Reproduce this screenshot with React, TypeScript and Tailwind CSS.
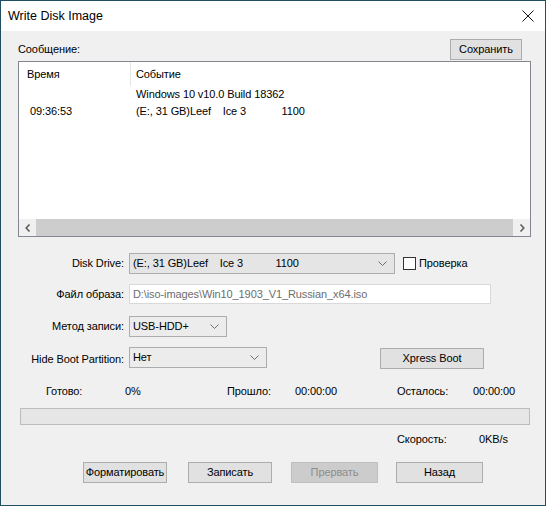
const Chevron = ({ dir }: { dir: 'left' | 'right' | 'down' }) => {
  if (dir === 'down') {
    return (
      <svg width="9" height="5" viewBox="0 0 9 5" className="block">
        <path d="M0.5 0.5 L4.5 4.5 L8.5 0.5" fill="none" stroke="#6e6e6e" strokeWidth="1" />
      </svg>
    )
  }
  return (
    <svg width="6" height="8" viewBox="0 0 6 8" className="block">
      <path
        d={dir === 'left' ? 'M4.5 0.5 L1.2 4 L4.5 7.5' : 'M1.5 0.5 L4.8 4 L1.5 7.5'}
        fill="none"
        stroke="#606060"
        strokeWidth="1.6"
      />
    </svg>
  )
}

const Combo = ({ text, width, bg }: { text: string; width: string; bg: string }) => (
  <div className={`flex h-[21px] ${width} ${bg} items-center justify-between border border-[#adadad] pl-[3px] pr-[7px]`}>
    <span className="whitespace-pre">{text}</span>
    <Chevron dir="down" />
  </div>
)

const Btn = ({ text, width, disabled }: { text: string; width: string; disabled?: boolean }) => (
  <div
    className={`flex h-[21px] ${width} items-center justify-center border ${
      disabled ? 'border-[#bfbfbf] bg-[#cccccc] text-[#8d8d8d]' : 'border-[#adadad] bg-[#e1e1e1] text-black'
    }`}
  >
    {text}
  </div>
)

const App = () => {
  return (
    <div className="h-[509px] w-[549px] bg-white" style={{ fontFamily: '"Liberation Sans", Arial, sans-serif' }}>
      <div className="flex h-[506px] w-[546px] flex-col border border-[#1f4f60] bg-[#f0f0f0] text-[11px] tracking-[-0.1px] text-black">
        {/* title bar */}
        <div className="flex h-[30px] shrink-0 items-center justify-between bg-white pl-[7px] pr-[8px] text-[12.5px] tracking-normal">
          <span>Write Disk Image</span>
          <svg width="12" height="12" viewBox="0 0 12 12" className="mr-[3px]">
            <path d="M0.5 0.5 L11.5 11.5 M11.5 0.5 L0.5 11.5" stroke="#111" strokeWidth="1" />
          </svg>
        </div>

        {/* message header */}
        <div className="ml-[17px] mr-[23px] mt-[8px] flex h-[20px] items-center justify-between">
          <span className="mt-[1px]">Сообщение:</span>
          <Btn text="Сохранить" width="w-[72px]" />
        </div>

        {/* log list */}
        <div className="ml-[17px] mt-[2px] flex h-[176px] w-[513px] flex-col border border-[#828790] bg-white">
          <div className="flex h-[24px] items-stretch">
            <div className="flex w-[112px] items-center border-r border-[#e5e5e5] pl-[8px]">Время</div>
            <div className="flex items-center pl-[5px]">Событие</div>
          </div>
          <div className="flex h-[17px] items-center pl-[117px]">Windows 10 v10.0 Build 18362</div>
          <div className="flex h-[17px] items-center">
            <span className="w-[117px] pl-[11px]">09:36:53</span>
            <span className="whitespace-pre">(E:, 31 GB)Leef    Ice 3            1100</span>
          </div>
          <div className="flex-1" />
          <div className="flex h-[17px] items-stretch">
            <div className="flex w-[17px] items-center justify-center bg-[#f0f0f0]">
              <Chevron dir="left" />
            </div>
            <div className="flex-1 bg-[#cdcdcd]" />
            <div className="flex w-[17px] items-center justify-center bg-[#f0f0f0]">
              <Chevron dir="right" />
            </div>
          </div>
        </div>

        {/* disk drive */}
        <div className="mt-[16px] flex h-[21px] items-center">
          <span className="w-[123px] text-right">Disk Drive:</span>
          <div className="ml-[5px]">
            <Combo text="(E:, 31 GB)Leef    Ice 3           1100" width="w-[266px]" bg="bg-[#e5e5e5]" />
          </div>
          <div className="ml-[8px] h-[13px] w-[13px] border border-[#333] bg-white" />
          <span className="ml-[3px]">Проверка</span>
        </div>

        {/* image file */}
        <div className="mt-[10px] flex h-[20px] items-center">
          <span className="w-[123px] text-right">Файл образа:</span>
          <div className="ml-[5px] flex h-[20px] w-[362px] items-center border border-[#d9d9d9] bg-white pl-[3px] text-[#6d6d6d]">
            D:\iso-images\Win10_1903_V1_Russian_x64.iso
          </div>
        </div>

        {/* write method */}
        <div className="mt-[12px] flex h-[21px] items-center">
          <span className="w-[123px] text-right">Метод записи:</span>
          <div className="ml-[5px]">
            <Combo text="USB-HDD+" width="w-[98px]" bg="bg-[#ececec]" />
          </div>
        </div>

        {/* hide boot partition */}
        <div className="mt-[10px] flex h-[22px] items-start">
          <span className="mt-[4px] w-[123px] text-right">Hide Boot Partition:</span>
          <div className="ml-[5px]">
            <Combo text="Нет" width="w-[138px]" bg="bg-[#ececec]" />
          </div>
          <div className="ml-[113px] mt-[1px]">
            <Btn text="Xpress Boot" width="w-[104px]" />
          </div>
        </div>

        {/* status */}
        <div className="mt-[15px] flex h-[14px] items-center">
          <span className="ml-[45px] w-[79px]">Готово:</span>
          <span className="w-[102px]">0%</span>
          <span className="w-[68px]">Прошло:</span>
          <span className="w-[102px]">00:00:00</span>
          <span className="w-[76px]">Осталось:</span>
          <span>00:00:00</span>
        </div>

        {/* progress */}
        <div className="ml-[19px] mt-[10px] h-[17px] w-[510px] border border-[#bcbcbc] bg-[#e6e6e6]" />

        <div className="mt-[7px] flex h-[14px] items-center">
          <span className="ml-[396px] w-[82px]">Скорость:</span>
          <span>0KB/s</span>
        </div>

        {/* buttons */}
        <div className="mt-[16px] flex h-[21px] items-center">
          <div className="ml-[82px]">
            <Btn text="Форматировать" width="w-[84px]" />
          </div>
          <div className="ml-[21px]">
            <Btn text="Записать" width="w-[84px]" />
          </div>
          <div className="ml-[19px]">
            <Btn text="Прервать" width="w-[87px]" disabled />
          </div>
          <div className="ml-[18px]">
            <Btn text="Назад" width="w-[87px]" />
          </div>
        </div>
      </div>
    </div>
  )
}

export default App
